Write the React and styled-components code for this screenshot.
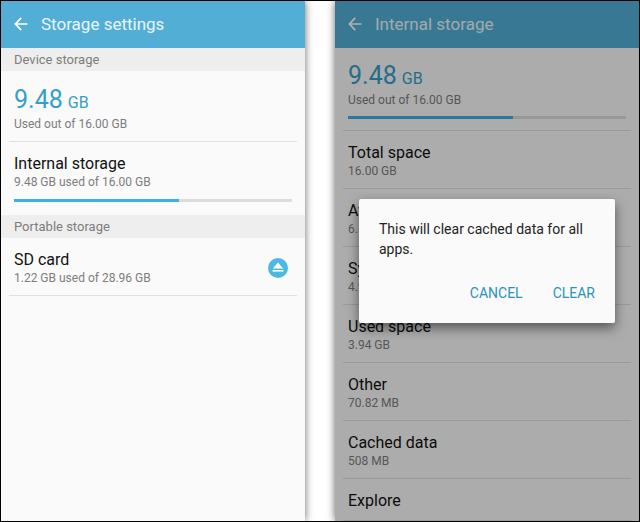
import React from 'react';
import styled, { createGlobalStyle } from 'styled-components';

const details = [
  { name: 'Total space', value: '16.00 GB' },
  { name: 'Available space', value: '6.52 GB' },
  { name: 'System memory', value: '4.97 GB' },
  { name: 'Used space', value: '3.94 GB' },
  { name: 'Other', value: '70.82 MB' },
  { name: 'Cached data', value: '508 MB' },
];

const usedPercent = (9.48 / 16) * 100;

const BackButton = () => (
  <IconButton type="button" aria-label="Back">
    <svg width="14" height="14" viewBox="0 0 14 14" fill="none">
      <path
        d="M13.4 7H1.6M7.2 0.9L1.4 7L7.2 13.1"
        stroke="currentColor"
        strokeWidth="1.7"
      />
    </svg>
  </IconButton>
);

const UsedSpace = () => (
  <>
    <Amount>
      9.48<small>GB</small>
    </Amount>
    <Detail>Used out of 16.00 GB</Detail>
  </>
);

const UsageBar = () => (
  <Track>
    <div style={{ width: `${usedPercent}%` }} />
  </Track>
);

const App = () => {
  return (
    <>
      <GlobalStyle />
      <Page>
        <Screen>
          <Header>
            <BackButton />
            <h1>Storage settings</h1>
          </Header>
          <Section>Device storage</Section>
          <Summary $top={14} $bottom={9}>
            <UsedSpace />
          </Summary>
          <Divider />
          <Row>
            <div>
              <Name>Internal storage</Name>
              <Detail>9.48 GB used of 16.00 GB</Detail>
            </div>
          </Row>
          <BarArea $bottom={13}>
            <UsageBar />
          </BarArea>
          <Section>Portable storage</Section>
          <Row>
            <div>
              <Name>SD card</Name>
              <Detail>1.22 GB used of 28.96 GB</Detail>
            </div>
            <EjectButton type="button" aria-label="Eject SD card">
              <svg width="20" height="20" viewBox="0 0 20 20">
                <circle cx="10" cy="10" r="10" fill="#4bb9e0" />
                <path d="M10 4.6L15.2 10.4H4.8Z" fill="#fff" />
                <rect x="4.6" y="12" width="10.8" height="1.6" fill="#fff" />
              </svg>
            </EjectButton>
          </Row>
          <Divider />
        </Screen>

        <Screen>
          <Header>
            <BackButton />
            <h1>Internal storage</h1>
          </Header>
          <Summary $top={13} $bottom={8}>
            <UsedSpace />
          </Summary>
          <BarArea $bottom={11}>
            <UsageBar />
          </BarArea>
          <Divider />
          {details.map((item) => (
            <React.Fragment key={item.name}>
              <Row>
                <div>
                  <Name>{item.name}</Name>
                  <Detail>{item.value}</Detail>
                </div>
              </Row>
              <Divider />
            </React.Fragment>
          ))}
          <Row>
            <Name>Explore</Name>
          </Row>
          <Divider />
          <Overlay>
            <Dialog role="dialog" aria-modal="true">
              <p>This will clear cached data for all apps.</p>
              <Actions>
                <ActionButton type="button">CANCEL</ActionButton>
                <ActionButton type="button">CLEAR</ActionButton>
              </Actions>
            </Dialog>
          </Overlay>
        </Screen>
      </Page>
    </>
  );
};

const GlobalStyle = createGlobalStyle`
  * {
    box-sizing: border-box;
  }
  body {
    margin: 0;
    background-color: #fff;
    font-family: Roboto, 'Liberation Sans', sans-serif;
  }
  h1, h2, h3, p {
    margin: 0;
    font-weight: normal;
  }
  button {
    border: none;
    padding: 0;
    background: none;
    font-family: inherit;
    cursor: pointer;
  }
`;

const Page = styled.main`
  display: grid;
  grid-template-columns: 1fr 1fr;
  gap: 30px;
  min-height: 100vh;
  overflow: hidden;
  border: 1px solid #000;
`;

const Screen = styled.section`
  position: relative;
  background-color: #fafafa;
  box-shadow: 0 0 8px rgba(0, 0, 0, 0.6);
`;

const Header = styled.header`
  display: flex;
  align-items: center;
  gap: 13px;
  height: 47px;
  padding: 0 13px 2px;
  background-color: #52aed5;
  color: #e9f6fc;
  h1 {
    font-size: 17px;
    line-height: 20px;
  }
`;

const IconButton = styled.button`
  display: flex;
  color: #fff;
`;

const Section = styled.h2`
  padding: 2px 13px 1px;
  background-color: #eeeeee;
  color: #7d7d7d;
  font-size: 13px;
  line-height: 20px;
`;

const Summary = styled.div`
  padding: ${(props) => props.$top}px 13px ${(props) => props.$bottom}px;
`;

const Amount = styled.p`
  display: flex;
  align-items: baseline;
  gap: 5px;
  padding-bottom: 1px;
  color: #359fc8;
  font-size: 25px;
  line-height: 30px;
  small {
    font-size: 16px;
    line-height: 16px;
  }
`;

const Row = styled.div`
  display: flex;
  align-items: center;
  justify-content: space-between;
  padding: 12px 17px 9px 13px;
`;

const Name = styled.h3`
  color: #111;
  font-size: 16px;
  line-height: 20px;
`;

const Detail = styled.p`
  color: #7d7d7d;
  font-size: 12px;
  line-height: 16px;
`;

const Divider = styled.hr`
  height: 1px;
  margin: 0 8px;
  border: none;
  background-color: #e0e0e0;
`;

const BarArea = styled.div`
  padding: 0 13px ${(props) => props.$bottom}px;
`;

const Track = styled.div`
  height: 3px;
  background-color: #dcdcdc;
  div {
    height: 100%;
    background-color: #3cb1e0;
  }
`;

const EjectButton = styled.button`
  display: flex;
`;

const Overlay = styled.div`
  position: absolute;
  inset: 0;
  display: flex;
  align-items: center;
  justify-content: center;
  padding: 24px;
  background-color: rgba(0, 0, 0, 0.31);
`;

const Dialog = styled.div`
  width: 100%;
  padding: 20px;
  border-radius: 2px;
  background-color: #fafafa;
  box-shadow: 0 5px 12px rgba(0, 0, 0, 0.5);
  color: #222;
  font-size: 14px;
  line-height: 20px;
`;

const Actions = styled.div`
  display: flex;
  justify-content: flex-end;
  gap: 30px;
  padding-top: 24px;
`;

const ActionButton = styled.button`
  color: #2a93ba;
  font-size: 14px;
  line-height: 20px;
`;

export default App;
